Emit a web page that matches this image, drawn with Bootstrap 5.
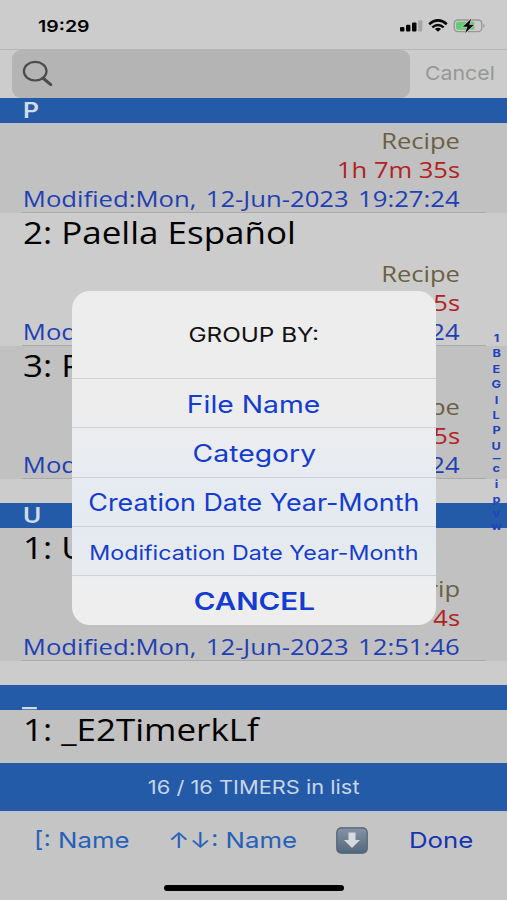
<!DOCTYPE html>
<html lang="en">
<head>
<meta charset="utf-8">
<meta name="viewport" content="width=device-width, initial-scale=1">
<title>Timers</title>
<link href="https://cdn.jsdelivr.net/npm/bootstrap@5.3.0/dist/css/bootstrap.min.css" rel="stylesheet">
<style>
  body { background: #cacaca; font-family: Inter, "Liberation Sans", sans-serif; color: #000; }
  .phone { width: 507px; height: 900px; background: #cccccc; }
  /* horizontally widened text */
  .wide { display: inline-block; white-space: pre; transform: scaleX(var(--w, 1.17)); transform-origin: left center; }
  .wide-end { transform-origin: right center; }
  .wide-mid { transform-origin: center; }

  .status { height: 49px; padding: 3px 21px 0 38px; }
  .clock { font-size: 16.5px; font-weight: 600; --w: 1.18; }
  .search { height: 49px; border-top: 1.5px solid #b6b6b6; }
  .search-field { margin-left: 12px; width: 398px; background: #b4b4b4; border-radius: 9px; padding-left: 10px; }
  .search-cancel { width: 97px; padding-left: 15px; font-size: 19px; color: #979797; --w: 1.12; }

  .section-bar { height: 25px; background: #245ba9; color: #d3dbe6; padding-left: 23px; font-size: 21px; font-weight: 600; line-height: 26px; --w: 1.18; }
  .section-under { display: inline-block; width: 17px; overflow: hidden; margin-left: -1px; line-height: 29px; --w: 1.5; }
  .entry { height: 133px; padding: 1px 47px 0 23px; background: #cccccc; font-family: "Open Sans", "Noto Sans", sans-serif; font-size: 22px; line-height: 29px; position: relative; }
  .entry.shade { background: #c1c1c1; }
  .entry::after { content: ""; position: absolute; left: 22px; right: 21px; bottom: 0; height: 1px; background: #aaaaaa; }
  .entry-name { height: 45px; font-size: 31px; line-height: 37px; --w: 1.128; }
  .entry-kind { color: #6c6042; --w: 1.16; }
  .entry-time { color: #b22222; --w: 1.16; }
  .entry-date { color: #1f3fb4; --w: 1.166; word-spacing: 2.4px; }
  .clip-first { height: 90px; }
  .clip-last { height: 53px; }
  .clip-last .entry-kind { line-height: 31px; }

  .count-bar { height: 48px; background: #245ba9; color: #c9d6e8; font-size: 18.5px; padding-top: 1px; --w: 1.18; }
  .tools { height: 89px; background: #c5c5c5; }
  .tool-row { height: 58px; font-size: 22px; color: #2561b8; padding-left: 34px; }
  .tool-sort { width: 134px; }
  .tool-order { width: 168px; }
  .tool-done { width: 98px; color: #1733b2; }
  .home-bar { width: 180px; height: 6px; border-radius: 3px; background: #000; margin-top: 16px; margin-left: 164px; }

  .sheet { left: 72px; top: 291px; width: 364px; height: 334px; border-radius: 18px; overflow: hidden; color: #143cd2;
    background: linear-gradient(#ededee 0, #ededee 38%, #e6ebf2 60%, #e4eaf1 72%, #e9ecef 84%, #eeeeee 88%); }
  .sheet-title { height: 87px; font-size: 20px; color: #111; padding-top: 1px; --w: 1.215; }
  .sheet-item { height: 49.3px; border-top: 1.5px solid #cfd3d8; font-size: 24px; padding-top: 3px; }
  .sheet-item-long { font-size: 20px; }

  .index-rail { right: 0; top: 331px; width: 21px; font-size: 11px; font-weight: 700; color: #2243bd; line-height: 15.4px; --w: 1.15; }
  .index-rail .under { height: 7px; line-height: 1px; --w: 1.5; }
  .index-rail .tight { height: 13px; line-height: 13px; }
</style>
</head>
<body>
<main class="phone d-flex flex-column position-relative overflow-hidden">
  <header class="status d-flex align-items-center justify-content-between flex-shrink-0">
    <span class="wide clock">19:29</span>
    <svg width="88" height="16" viewBox="0 0 88 16" aria-hidden="true">
      <g fill="#050505">
        <rect x="2" y="9" width="4.400" height="4.600" rx="1"/><rect x="8" y="6.800" width="4.400" height="6.800" rx="1"/><rect x="14" y="4.400" width="4.500" height="9.200" rx="1"/>
      </g>
      <rect x="20" y="2.200" width="4.400" height="11.400" rx="1" fill="#a6a6a6"/>
      <g fill="none" stroke="#050505" stroke-width="2.500">
        <path d="M31.200 6.200Q40 -1.400 48.800 6.200"/><path d="M34.300 9.400Q40 4.600 45.700 9.400"/>
      </g>
      <path d="M36.900 11Q40 8.700 43.100 11L40 13.800Z" fill="#050505"/>
      <rect x="56.200" y="2" width="27.600" height="11.600" rx="3.600" fill="none" stroke="#969696" stroke-width="1.300"/>
      <rect x="58" y="3.800" width="18.500" height="8" rx="1.800" fill="#63cd72"/>
      <path d="M85.300 5.800Q88 7.800 85.300 9.800Z" fill="#969696"/>
      <path d="M73.200 .8L64.800 8.700H69.400L67.200 15L76 6.800H71.200Z" fill="#050505" stroke="#cccccc" stroke-width="1.400" paint-order="stroke"/>
    </svg>
  </header>

  <div class="search d-flex flex-shrink-0">
    <div class="search-field d-flex align-items-center">
      <svg width="32" height="28" viewBox="0 0 32 28" fill="none" stroke="#4b4b4b" aria-hidden="true">
        <ellipse cx="13.200" cy="11.200" rx="11.300" ry="9.300" stroke-width="2.200"/><path d="M20.800 18L28.800 24.600" stroke-width="3" stroke-linecap="round"/>
      </svg>
    </div>
    <div class="search-cancel d-flex align-items-center"><span class="wide">Cancel</span></div>
  </div>

  <div class="section-bar flex-shrink-0"><span class="wide">P</span></div>

  <div class="clip-first d-flex flex-column justify-content-end overflow-hidden flex-shrink-0">
    <article class="entry shade flex-shrink-0">
      <div class="entry-name"></div>
      <div class="entry-kind text-end"><span class="wide wide-end">Recipe</span></div>
      <div class="entry-time text-end"><span class="wide wide-end">1h 7m 35s</span></div>
      <div class="entry-date text-end"><span class="wide wide-end">Modified:Mon, 12-Jun-2023 19:27:24</span></div>
    </article>
  </div>
  <article class="entry flex-shrink-0">
    <div class="entry-name"><span class="wide">2: Paella Español</span></div>
    <div class="entry-kind text-end"><span class="wide wide-end">Recipe</span></div>
    <div class="entry-time text-end"><span class="wide wide-end">1h 7m 35s</span></div>
    <div class="entry-date text-end"><span class="wide wide-end">Modified:Mon, 12-Jun-2023 19:27:24</span></div>
  </article>
  <article class="entry shade flex-shrink-0">
    <div class="entry-name"><span class="wide">3: Paella</span></div>
    <div class="entry-kind text-end"><span class="wide wide-end">Recipe</span></div>
    <div class="entry-time text-end"><span class="wide wide-end">1h 7m 35s</span></div>
    <div class="entry-date text-end"><span class="wide wide-end">Modified:Mon, 12-Jun-2023 19:27:24</span></div>
  </article>

  <div class="section-bar flex-shrink-0 mt-4"><span class="wide">U</span></div>
  <article class="entry shade flex-shrink-0">
    <div class="entry-name"><span class="wide">1: U</span></div>
    <div class="entry-kind text-end"><span class="wide wide-end">Trip</span></div>
    <div class="entry-time text-end"><span class="wide wide-end">4s</span></div>
    <div class="entry-date text-end"><span class="wide wide-end">Modified:Mon, 12-Jun-2023 12:51:46</span></div>
  </article>

  <div class="section-bar flex-shrink-0 mt-4"><span class="section-under"><span class="wide">_</span></span></div>
  <div class="clip-last overflow-hidden flex-shrink-0">
    <article class="entry shade">
      <div class="entry-name"><span class="wide">1: _E2TimerkLf</span></div>
      <div class="entry-kind text-end"><span class="wide wide-end">General</span></div>
    </article>
  </div>

  <div class="count-bar d-flex align-items-center justify-content-center flex-shrink-0"><span class="wide wide-mid">16 / 16 TIMERS in list</span></div>
  <footer class="tools flex-shrink-0">
    <div class="tool-row d-flex align-items-center">
      <span class="tool-sort"><span class="wide">[: Name</span></span>
      <span class="tool-order"><span class="wide">↑↓: Name</span></span>
      <svg width="32" height="27" viewBox="0 0 32 27" aria-hidden="true">
        <defs><linearGradient id="key" x2="0" y2="1"><stop stop-color="#8594a4"/><stop offset="1" stop-color="#53677c"/></linearGradient></defs>
        <rect x=".8" y=".8" width="30.400" height="25.400" rx="4.500" fill="url(#key)" stroke="#4f6073" stroke-width="1.200"/>
        <path d="M12.500 5.500H19.500V13H24L16 21L8 13H12.500Z" fill="#d6dadd"/>
      </svg>
      <span class="tool-done ms-auto"><span class="wide">Done</span></span>
    </div>
    <div class="home-bar"></div>
  </footer>

  <nav class="index-rail position-absolute d-flex flex-column align-items-center">
    <span class="wide wide-mid">1</span><span class="wide wide-mid">B</span><span class="wide wide-mid">E</span><span class="wide wide-mid">G</span><span class="wide wide-mid">I</span><span class="wide wide-mid">L</span><span class="wide wide-mid">P</span><span class="wide wide-mid">U</span><span class="wide wide-mid under">_</span><span class="wide wide-mid">c</span><span class="wide wide-mid">i</span><span class="wide wide-mid">p</span><span class="wide wide-mid tight">v</span><span class="wide wide-mid tight">w</span>
  </nav>

  <section class="sheet position-absolute d-flex flex-column" role="dialog">
    <div class="sheet-title d-flex align-items-center justify-content-center"><span class="wide wide-mid">GROUP BY:</span></div>
    <div class="sheet-item d-flex align-items-center justify-content-center"><span class="wide wide-mid" style="--w:1.18">File Name</span></div>
    <div class="sheet-item d-flex align-items-center justify-content-center"><span class="wide wide-mid" style="--w:1.18">Category</span></div>
    <div class="sheet-item d-flex align-items-center justify-content-center"><span class="wide wide-mid" style="--w:1.12">Creation Date Year-Month</span></div>
    <div class="sheet-item sheet-item-long d-flex align-items-center justify-content-center"><span class="wide wide-mid" style="--w:1.16">Modification Date Year-Month</span></div>
    <div class="sheet-item d-flex align-items-center justify-content-center fw-semibold"><span class="wide wide-mid" style="--w:1.23">CANCEL</span></div>
  </section>
</main>
<script src="https://cdn.jsdelivr.net/npm/bootstrap@5.3.0/dist/js/bootstrap.bundle.min.js"></script>
</body>
</html>
